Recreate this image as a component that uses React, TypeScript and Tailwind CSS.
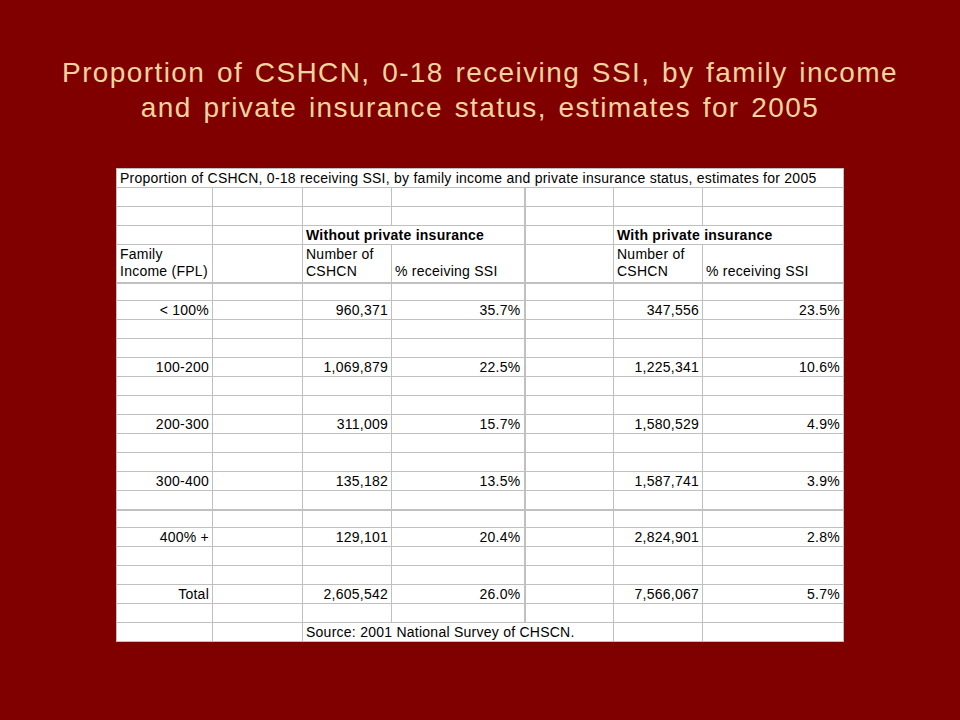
import React from 'react';

type Cell = {
  text?: React.ReactNode;
  span?: number;
  align?: 'left' | 'right';
  bold?: boolean;
  thickLeft?: boolean;
};

type Row = {
  cells: Cell[];
  tall?: boolean;
  thickTop?: boolean;
};

const blank = (): Cell[] => [
  {},
  {},
  {},
  {},
  { thickLeft: true },
  {},
  {},
];

const data = (label: string, n1: string, p1: string, n2: string, p2: string): Cell[] => [
  { text: label, align: 'right' },
  {},
  { text: n1, align: 'right' },
  { text: p1, align: 'right' },
  { thickLeft: true },
  { text: n2, align: 'right' },
  { text: p2, align: 'right' },
];

const rows: Row[] = [
  {
    cells: [
      {
        text: 'Proportion of CSHCN, 0-18 receiving SSI, by family income and private insurance status, estimates for 2005',
        span: 7,
      },
    ],
  },
  { cells: blank() },
  { cells: blank() },
  {
    cells: [
      {},
      {},
      { text: 'Without private insurance', span: 2, bold: true },
      { thickLeft: true },
      { text: 'With private insurance', span: 2, bold: true },
    ],
  },
  {
    tall: true,
    cells: [
      { text: <>Family<br />Income (FPL)</> },
      {},
      { text: <>Number of<br />CSHCN</> },
      { text: <><br />% receiving SSI</> },
      { thickLeft: true },
      { text: <>Number of<br />CSHCN</> },
      { text: <><br />% receiving SSI</> },
    ],
  },
  { cells: blank(), thickTop: true },
  { cells: data('< 100%', '960,371', '35.7%', '347,556', '23.5%') },
  { cells: blank() },
  { cells: blank() },
  { cells: data('100-200', '1,069,879', '22.5%', '1,225,341', '10.6%') },
  { cells: blank() },
  { cells: blank() },
  { cells: data('200-300', '311,009', '15.7%', '1,580,529', '4.9%') },
  { cells: blank() },
  { cells: blank() },
  { cells: data('300-400', '135,182', '13.5%', '1,587,741', '3.9%') },
  { cells: blank() },
  { cells: blank(), thickTop: true },
  { cells: data('400% +', '129,101', '20.4%', '2,824,901', '2.8%') },
  { cells: blank() },
  { cells: blank() },
  { cells: data('Total', '2,605,542', '26.0%', '7,566,067', '5.7%') },
  { cells: blank() },
  {
    cells: [
      {},
      {},
      { text: 'Source: 2001 National Survey of CHSCN.', span: 3 },
      {},
      {},
    ],
  },
];

const widths = [96, 90, 89, 133, 89, 89, 141];

export default function App() {
  return (
    <div className="w-[960px] h-[720px] bg-[#800000] flex flex-col items-center font-['Liberation_Sans',Arial,sans-serif]">
      <h1 className="pt-[55px] text-center text-[28px] leading-[35px] tracking-[1.4px] [word-spacing:2.5px] text-[#f2d59e] font-normal">
        Proportion of CSHCN, 0-18 receiving SSI, by family income
        <br />
        and private insurance status, estimates for 2005
      </h1>
      <table className="mt-[43px] table-fixed border-collapse bg-white border border-[#b8b8b8] text-[14px] tracking-[0.25px] text-black">
        <colgroup>
          {widths.map((w, i) => (
            <col key={i} style={{ width: w }} />
          ))}
        </colgroup>
        <tbody>
          {rows.map((row, ri) => (
            <tr
              key={ri}
              className={row.tall ? 'h-[38px]' : row.thickTop ? 'h-[18px]' : 'h-[19px]'}
            >
              {row.cells.map((c, ci) => (
                <td
                  key={ci}
                  colSpan={c.span}
                  className={[
                    'border border-[#c0c0c0] px-[3px] py-0 leading-[17px] whitespace-nowrap overflow-hidden align-middle',
                    c.align === 'right' ? 'text-right' : 'text-left',
                    c.bold ? 'font-bold' : '',
                    c.thickLeft ? 'border-l-2' : '',
                    row.thickTop ? 'border-t-2' : '',
                  ].join(' ')}
                >
                  {c.text}
                </td>
              ))}
            </tr>
          ))}
        </tbody>
      </table>
    </div>
  );
}
